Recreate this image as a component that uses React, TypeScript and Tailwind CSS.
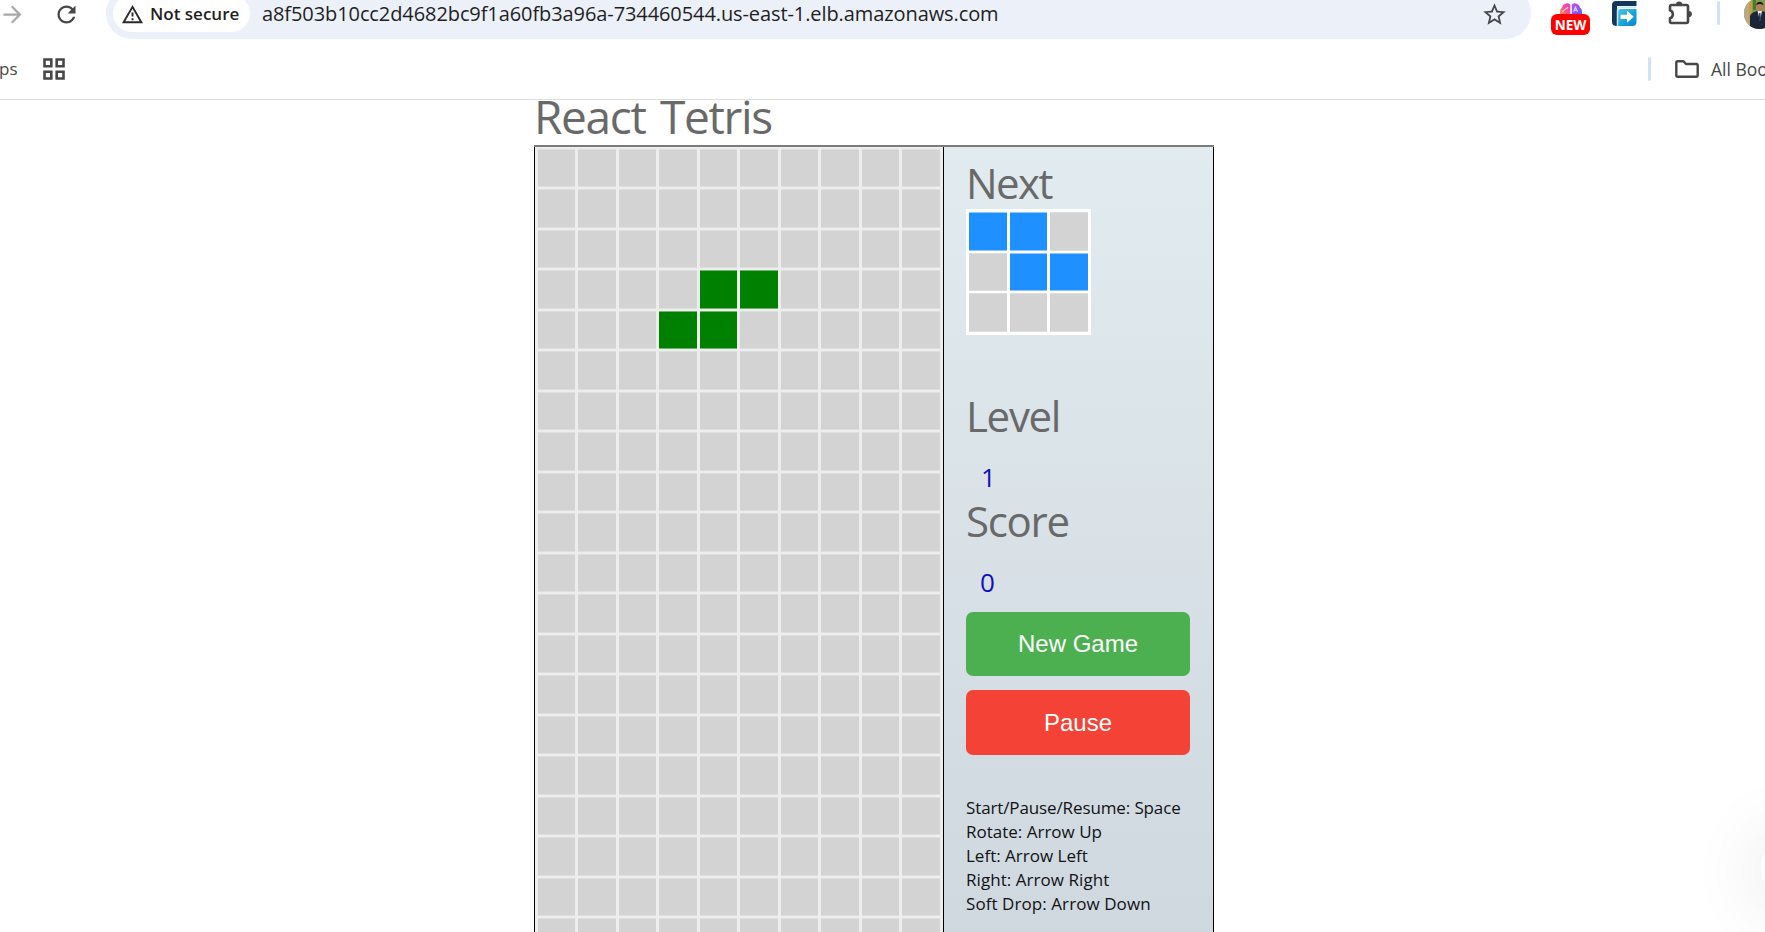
type CellColor = "empty" | "green" | "blue";

const cellClass: Record<CellColor, string> = {
  empty: "border-[#dedede] bg-[#d3d3d3]",
  green: "border-[#6fb56f] bg-[#008000]",
  blue: "border-[#8ec6ff] bg-[#1e90ff]",
};

function Cell({ color }: { color: CellColor }) {
  return <div className={`h-[38.4px] w-[37.5px] border-y ${cellClass[color]}`} />;
}

const activePiece = new Set(["3-4", "3-5", "4-3", "4-4"]);
const nextPiece: CellColor[] = [
  "blue", "blue", "empty",
  "empty", "blue", "blue",
  "empty", "empty", "empty",
];

function Icon({ d, size, className = "" }: { d: string; size: number; className?: string }) {
  return (
    <svg width={size} height={size} viewBox="0 0 24 24" fill="currentColor" className={`shrink-0 ${className}`}>
      <path d={d} />
    </svg>
  );
}

const paths = {
  forward: "M12 4l-1.41 1.41L16.17 11H4v2h12.17l-5.58 5.59L12 20l8-8z",
  refresh:
    "M17.65 6.35C16.2 4.9 14.21 4 12 4c-4.42 0-7.99 3.58-7.99 8s3.57 8 7.99 8c3.73 0 6.84-2.55 7.73-6h-2.08c-.82 2.33-3.04 4-5.65 4-3.31 0-6-2.69-6-6s2.69-6 6-6c1.66 0 3.14.69 4.22 1.78L13 11h7V4l-2.35 2.35z",
  warning: "M12 5.99L19.53 19H4.47L12 5.99M12 2L1 21h22L12 2zm1 14h-2v2h2v-2zm0-6h-2v4h2v-4z",
  star: "M22 9.24l-7.19-.62L12 2 9.19 8.63 2 9.24l5.46 4.73L5.82 21 12 17.27 18.18 21l-1.63-7.03L22 9.24zM12 15.4l-3.76 2.27 1-4.28-3.32-2.88 4.38-.38L12 6.1l1.71 4.04 4.38.38-3.32 2.88 1 4.28L12 15.4z",
};

function NewExtension() {
  return (
    <div className="ml-5 flex h-[38px] w-[39px] shrink-0 flex-col items-center pt-[3px]">
      <svg width="22" height="11" viewBox="0 0 22 11" className="shrink-0">
        <defs>
          <linearGradient id="lobeA" x1="0" y1="1" x2="1" y2="0">
            <stop offset="0" stopColor="#ffa040" />
            <stop offset="0.45" stopColor="#ff4d8d" />
            <stop offset="1" stopColor="#e040d0" />
          </linearGradient>
          <linearGradient id="lobeB" x1="0" y1="0" x2="1" y2="1">
            <stop offset="0" stopColor="#c04df0" />
            <stop offset="1" stopColor="#6a5cf5" />
          </linearGradient>
        </defs>
        <path d="M10.3 11V1.8C9 .2 6.600-.2 5 .9 3.600 1.300 2.300 2.500 2.300 4.200 .700 5.200 0 7 0 9v2z" fill="url(#lobeA)" />
        <path d="M11.800 11V1.800C13-.2 15.400-.2 17 .9c1.400.4 2.700 1.600 2.700 3.300C21.300 5.200 22 7 22 9v2z" fill="url(#lobeB)" />
        <path d="M2.500 9C4 5.500 6.500 7 8 4M13.600 8.700l1.800-4.500 2.200 4.500M14.400 7.300h2.400" fill="none" stroke="#fff" strokeOpacity=".75" strokeWidth="1.100" />
      </svg>
      <div className="flex h-[21px] w-[39px] shrink-0 items-center justify-center rounded-[6px] bg-[#ff0000] text-[13.5px] leading-[20px] font-bold text-white">
        NEW
      </div>
    </div>
  );
}

function ArrowExtension() {
  return (
    <svg width="25" height="25" viewBox="0 0 25 25" className="ml-[22px] shrink-0">
      <defs>
        <linearGradient id="sheet" x1="0" y1="0" x2="1" y2="1">
          <stop offset="0" stopColor="#4cc3ea" />
          <stop offset="0.6" stopColor="#12a0dc" />
          <stop offset="1" stopColor="#0a86cc" />
        </linearGradient>
      </defs>
      <path d="M4 0H24.500V5H5V25C1.500 25 0 23.500 0 21V4C0 1.500 1.500 0 4 0z" fill="#12365c" />
      <path d="M8.500 8H24.500V21c0 2.500-1.500 4-4 4H6V10.500c0-1.700.8-2.500 2.500-2.500z" fill="url(#sheet)" />
      <path d="M5.500 25V9.500c0-2 1-3.200 3-3.200H24.500" fill="none" stroke="#c9ecf8" strokeWidth="1.500" />
      <path d="M8.500 13.800h6.500V9.800l6.800 6-6.800 6V18H8.500z" fill="#fff" />
    </svg>
  );
}

function PuzzleIcon() {
  return (
    <svg width="28" height="28" viewBox="0 0 28 28" className="ml-[29px] shrink-0 text-[#474747]">
      <path
        d="M4 10.200V6.500a1.500 1.500 0 0 1 1.500-1.500H20.500a1.500 1.500 0 0 1 1.500 1.500V21.500a1.500 1.500 0 0 1-1.500 1.500H5.500a1.500 1.500 0 0 1-1.500-1.500V18.300a4.300 4.300 0 0 0 0-8.100z"
        fill="none"
        stroke="currentColor"
        strokeWidth="2.600"
        strokeLinejoin="round"
      />
      <path d="M10 4.500a3.100 3.100 0 0 1 6.200 0zM22.800 11a3.100 3.100 0 0 1 0 6.200z" fill="currentColor" />
    </svg>
  );
}

function Avatar() {
  return (
    <svg width="31" height="31" viewBox="0 0 31 31" className="ml-6 shrink-0">
      <defs>
        <clipPath id="round">
          <circle cx="15.500" cy="15.500" r="15.500" />
        </clipPath>
      </defs>
      <g clipPath="url(#round)">
        <rect width="31" height="31" fill="#7fa04a" />
        <rect width="6" height="31" fill="#b9a98a" />
        <rect x="5" width="3" height="31" fill="#c79a45" />
        <rect x="9" width="3" height="12" fill="#4d7a2c" />
        <path d="M6 31V18c1-3 4-4 7-5h5c4 1 7 2 8 5v13z" fill="#1c2538" />
        <path d="M13.500 13h4.500l-2 10z" fill="#e8eaf0" />
        <path d="M15.200 15h1.200l.5 6-1 2-1-2z" fill="#2a3350" />
        <ellipse cx="15.800" cy="8.500" rx="3.300" ry="4.500" fill="#b57f5e" />
        <path d="M12.200 7.500c0-5 7.200-5 7.200 0-1.500-2-5.500-2-7.200 0z" fill="#1d1714" />
      </g>
    </svg>
  );
}

function BrowserChrome() {
  return (
    <header className="h-[100px] shrink-0 overflow-hidden border-b border-[#dedede] bg-white">
      <div className="-mt-[13px] flex h-[52px] items-center">
        <Icon d={paths.forward} size={27} className="-ml-px mt-0.5 text-[#a9a9a9]" />
        <Icon d={paths.refresh} size={27} className="mt-0.5 ml-[27px] text-[#474747]" />
        <div className="ml-[26px] flex h-[52px] w-[1425px] shrink-0 items-center rounded-full bg-[#ecf0f9] pl-[7px]">
          <div className="flex h-[37px] w-[137px] shrink-0 items-center rounded-full bg-white pl-[8px]">
            <Icon d={paths.warning} size={23} className="mt-[3px] text-[#2a2a2a]" />
            <span className="mt-0.5 ml-[6px] text-[17px] leading-6 font-semibold whitespace-nowrap text-[#1f1f1f]">Not secure</span>
          </div>
          <span className="mt-0.5 ml-[12px] text-[20px] leading-6 tracking-[-0.09px] whitespace-nowrap text-[#1f1f1f]">
            a8f503b10cc2d4682bc9f1a60fb3a96a-734460544.us-east-1.elb.amazonaws.com
          </span>
          <Icon d={paths.star} size={27} className="mt-0.5 mr-[23px] ml-auto text-[#474747]" />
        </div>
        <div className="mt-[13px] flex h-[39px] shrink-0 items-start">
          <NewExtension />
          <div className="pt-px">
            <ArrowExtension />
          </div>
          <PuzzleIcon />
          <div className="mt-px ml-[23px] h-6 w-[3px] rounded-full bg-[#d0e1fd]" />
          <div className="-mt-[2px]">
            <Avatar />
          </div>
        </div>
      </div>
      <div className="flex h-[60px] items-center text-[17.5px] whitespace-nowrap text-[#474747]">
        <span className="-ml-px w-[44px] shrink-0 text-[17px] leading-6">ps</span>
        <svg width="22" height="22" viewBox="0 0 22 22" fill="none" stroke="currentColor" strokeWidth="2.600" className="shrink-0">
          <path d="M1.500 1.500h6.800v6.800H1.500zM13.700 1.500h6.800v6.800h-6.800zM1.500 13.700h6.800v6.800H1.500zM13.700 13.700h6.800v6.800h-6.800z" />
        </svg>
        <div className="ml-[1583px] h-6 w-[3px] shrink-0 rounded-full bg-[#d0e1fd]" />
        <svg width="24" height="18" viewBox="0 0 24 18" fill="none" stroke="currentColor" strokeWidth="2.400" strokeLinejoin="round" className="ml-6 shrink-0">
          <path d="M1.300 2.500a1.200 1.200 0 0 1 1.200-1.200H8.500L11 4H21.500a1.200 1.200 0 0 1 1.200 1.200V15.500a1.200 1.200 0 0 1-1.200 1.200H2.500a1.200 1.200 0 0 1-1.200-1.200z" />
        </svg>
        <span className="ml-[12px] leading-6">All Bookmarks</span>
      </div>
    </header>
  );
}

function Board() {
  return (
    <div className="h-[812px] w-[408px] shrink-0 bg-[#ededed] pt-[1.9px] pl-[2.9px]">
      <div className="grid grid-cols-[repeat(10,37.5px)] gap-x-[3px] gap-y-[2.1px]">
        {Array.from({ length: 200 }, (_, i) => (
          <Cell key={i} color={activePiece.has(`${Math.floor(i / 10)}-${i % 10}`) ? "green" : "empty"} />
        ))}
      </div>
    </div>
  );
}

function Sidebar() {
  return (
    <aside className="flex w-[271px] shrink-0 flex-col border-x border-black bg-linear-to-b from-[#e2ebef] to-[#cfd7df] pt-[10px] pl-[22px]">
      <h2 className="h-[52px] text-[42px] leading-[52px] tracking-[-1.6px] text-[#696969]">Next</h2>
      <div className="grid h-[126px] w-[125px] grid-cols-[repeat(3,37.5px)] content-start gap-x-[3px] gap-y-[2.1px] bg-white pt-[3.4px] pl-[3.4px]">
        {nextPiece.map((color, i) => (
          <Cell key={i} color={color} />
        ))}
      </div>
      <h2 className="mt-[55px] h-[52px] text-[42px] leading-[52px] tracking-[-1.3px] text-[#696969]">Level</h2>
      <div className="mt-[17px] h-9 pl-[15px] text-[26px] leading-9 text-[#0f0fc0]">1</div>
      <h2 className="h-[52px] text-[42px] leading-[52px] tracking-[-1.3px] text-[#696969]">Score</h2>
      <div className="mt-[17px] h-9 pl-[14px] text-[26px] leading-9 text-[#0f0fc0]">0</div>
      <button className="mt-[11.5px] h-[64.5px] w-[224px] rounded-[7px] bg-[#4caf50] font-['Liberation_Sans',sans-serif] text-[24px] text-white">
        New Game
      </button>
      <button className="mt-[14px] h-[65px] w-[224px] rounded-[7px] bg-[#f44336] font-['Liberation_Sans',sans-serif] text-[24px] text-white">
        Pause
      </button>
      <div className="mt-[41px] text-[17px] leading-6 whitespace-nowrap text-[#101214]">
        <p className="tracking-[-0.12px]">Start/Pause/Resume: Space</p>
        <p>Rotate: Arrow Up</p>
        <p>Left: Arrow Left</p>
        <p className="tracking-[0.05px]">Right: Arrow Right</p>
        <p className="tracking-[0.07px]">Soft Drop: Arrow Down</p>
      </div>
    </aside>
  );
}

export default function App() {
  return (
    <div className="relative flex h-[932px] w-[1765px] flex-col overflow-hidden bg-white font-['Open_Sans','Noto_Sans',sans-serif]">
      <BrowserChrome />
      <main className="min-h-0 flex-1 overflow-hidden pl-[534px]">
        <h1 className="-mt-[7px] h-[46px] text-[46px] leading-[47px] tracking-[-1.35px] whitespace-nowrap text-[#696969] [word-spacing:4px]">
          React Tetris
        </h1>
        <div className="mt-[6px] flex h-[812px] w-[680px] border-t-2 border-[#7b7b79]">
          <div className="border-l border-black">
            <Board />
          </div>
          <Sidebar />
        </div>
      </main>
      <div className="absolute top-[834px] left-[1761px] h-[68px] w-[68px] rounded-full bg-white shadow-[0_4px_70px_12px_rgba(0,0,0,0.07)]" />
    </div>
  );
}
